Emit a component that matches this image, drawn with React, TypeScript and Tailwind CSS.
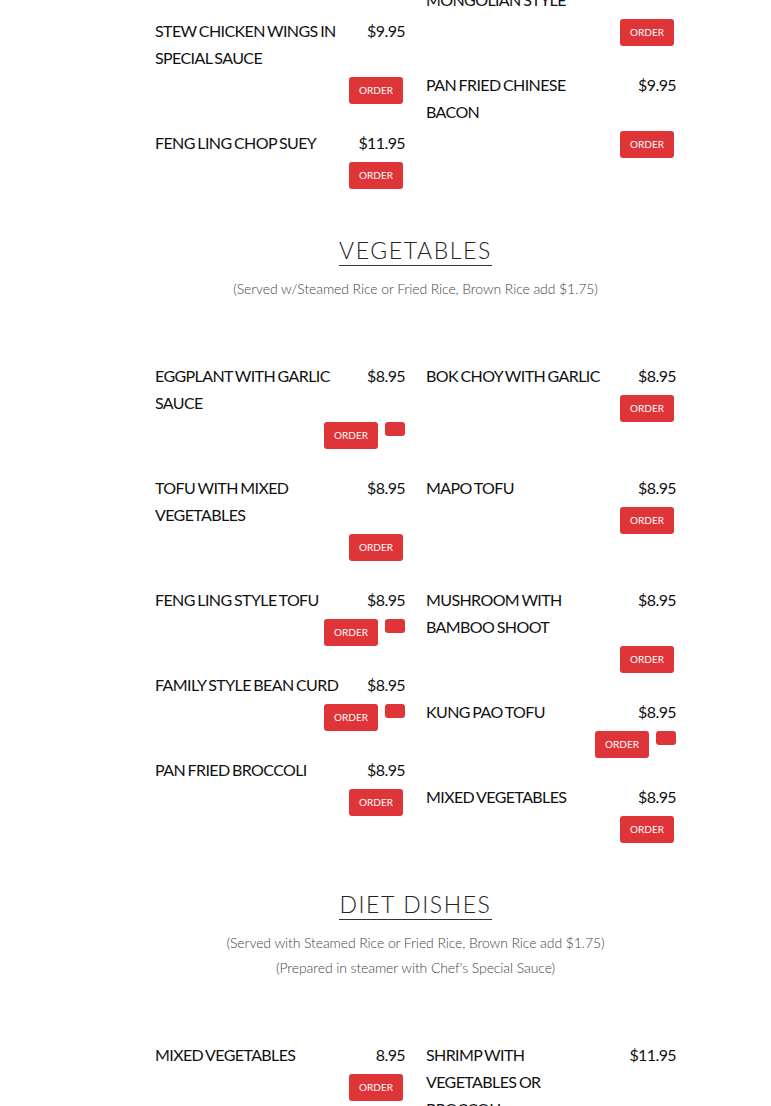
type Item = {
  name: string;
  price: string;
  extra?: boolean;
};

type Section = {
  title?: string;
  notes?: string[];
  items: Item[];
};

const sections: Section[] = [
  {
    items: [
      { name: 'HUNAN PORK', price: '$9.95' },
      { name: 'SLICED BEEF\nSAUTÉED IN\nMONGOLIAN STYLE', price: '$10.95' },
      { name: 'STEW CHICKEN WINGS IN SPECIAL SAUCE', price: '$9.95' },
      { name: 'PAN FRIED CHINESE BACON', price: '$9.95' },
      { name: 'FENG LING CHOP SUEY', price: '$11.95' },
    ],
  },
  {
    title: 'VEGETABLES',
    notes: ['(Served w/Steamed Rice or Fried Rice, Brown Rice add $1.75)'],
    items: [
      { name: 'EGGPLANT WITH GARLIC SAUCE', price: '$8.95', extra: true },
      { name: 'BOK CHOY WITH GARLIC', price: '$8.95' },
      { name: 'TOFU WITH MIXED VEGETABLES', price: '$8.95' },
      { name: 'MAPO TOFU', price: '$8.95' },
      { name: 'FENG LING STYLE TOFU', price: '$8.95', extra: true },
      { name: 'MUSHROOM WITH BAMBOO SHOOT', price: '$8.95' },
      { name: 'FAMILY STYLE BEAN CURD', price: '$8.95', extra: true },
      { name: 'KUNG PAO TOFU', price: '$8.95', extra: true },
      { name: 'PAN FRIED BROCCOLI', price: '$8.95' },
      { name: 'MIXED VEGETABLES', price: '$8.95' },
    ],
  },
  {
    title: 'DIET DISHES',
    notes: [
      '(Served with Steamed Rice or Fried Rice, Brown Rice add $1.75)',
      "(Prepared in steamer with Chef's Special Sauce)",
    ],
    items: [
      { name: 'MIXED VEGETABLES', price: '8.95' },
      { name: 'SHRIMP WITH VEGETABLES OR BROCCOLI', price: '$11.95' },
      { name: 'CHICKEN WITH VEGETABLES OR BROCCOLI', price: '$10.95' },
      { name: 'BEAN CURD WITH MIXED VEGETABLES', price: '$9.95' },
    ],
  },
];

function MenuItem({ item, right }: { item: Item; right: boolean }) {
  return (
    <div className={`w-[250px] mb-[25px] ${right ? 'float-right clear-right' : 'float-left clear-left'}`}>
      <div className="flex items-start text-[16px] leading-[27px] text-[#111] tracking-[-0.6px] [word-spacing:-1px]">
        <p className="w-[188px] whitespace-pre-line">{item.name}</p>
        <p className="flex-1 text-right">{item.price}</p>
      </div>
      <div className={`flex justify-end items-start mt-[6px] ${item.extra ? '' : 'pr-[2px]'}`}>
        <button className="w-[54px] h-[27px] rounded-[3px] bg-[#df3438] text-white text-[10px] leading-[27px] text-center">
          ORDER
        </button>
        {item.extra && <span className="ml-[7px] w-[20px] h-[14px] rounded-[3px] bg-[#df3438]" />}
      </div>
    </div>
  );
}

export default function App() {
  return (
    <div className="min-h-screen bg-white overflow-hidden font-['Lato','Open_Sans',sans-serif]">
      <div className="ml-[155px] w-[521px] -mt-[68px]">
        {sections.map((section, si) => (
          <section key={si}>
            {section.title && (
              <div className="mt-[21px] text-center">
                <h2 className="inline-block border-b border-[#333] text-[23px] leading-[30px] font-light tracking-[1.6px] text-[#222]">
                  {section.title}
                </h2>
                <div className="mt-[10px] mb-[61px] text-[14px] leading-[25px] font-light text-[#444] tracking-[-0.1px]">
                  {section.notes?.map((n) => (
                    <p key={n}>{n}</p>
                  ))}
                </div>
              </div>
            )}
            <div className="flow-root">
              {section.items.map((item, i) => (
                <MenuItem key={item.name} item={item} right={i % 2 === 1} />
              ))}
            </div>
          </section>
        ))}
      </div>
    </div>
  );
}
